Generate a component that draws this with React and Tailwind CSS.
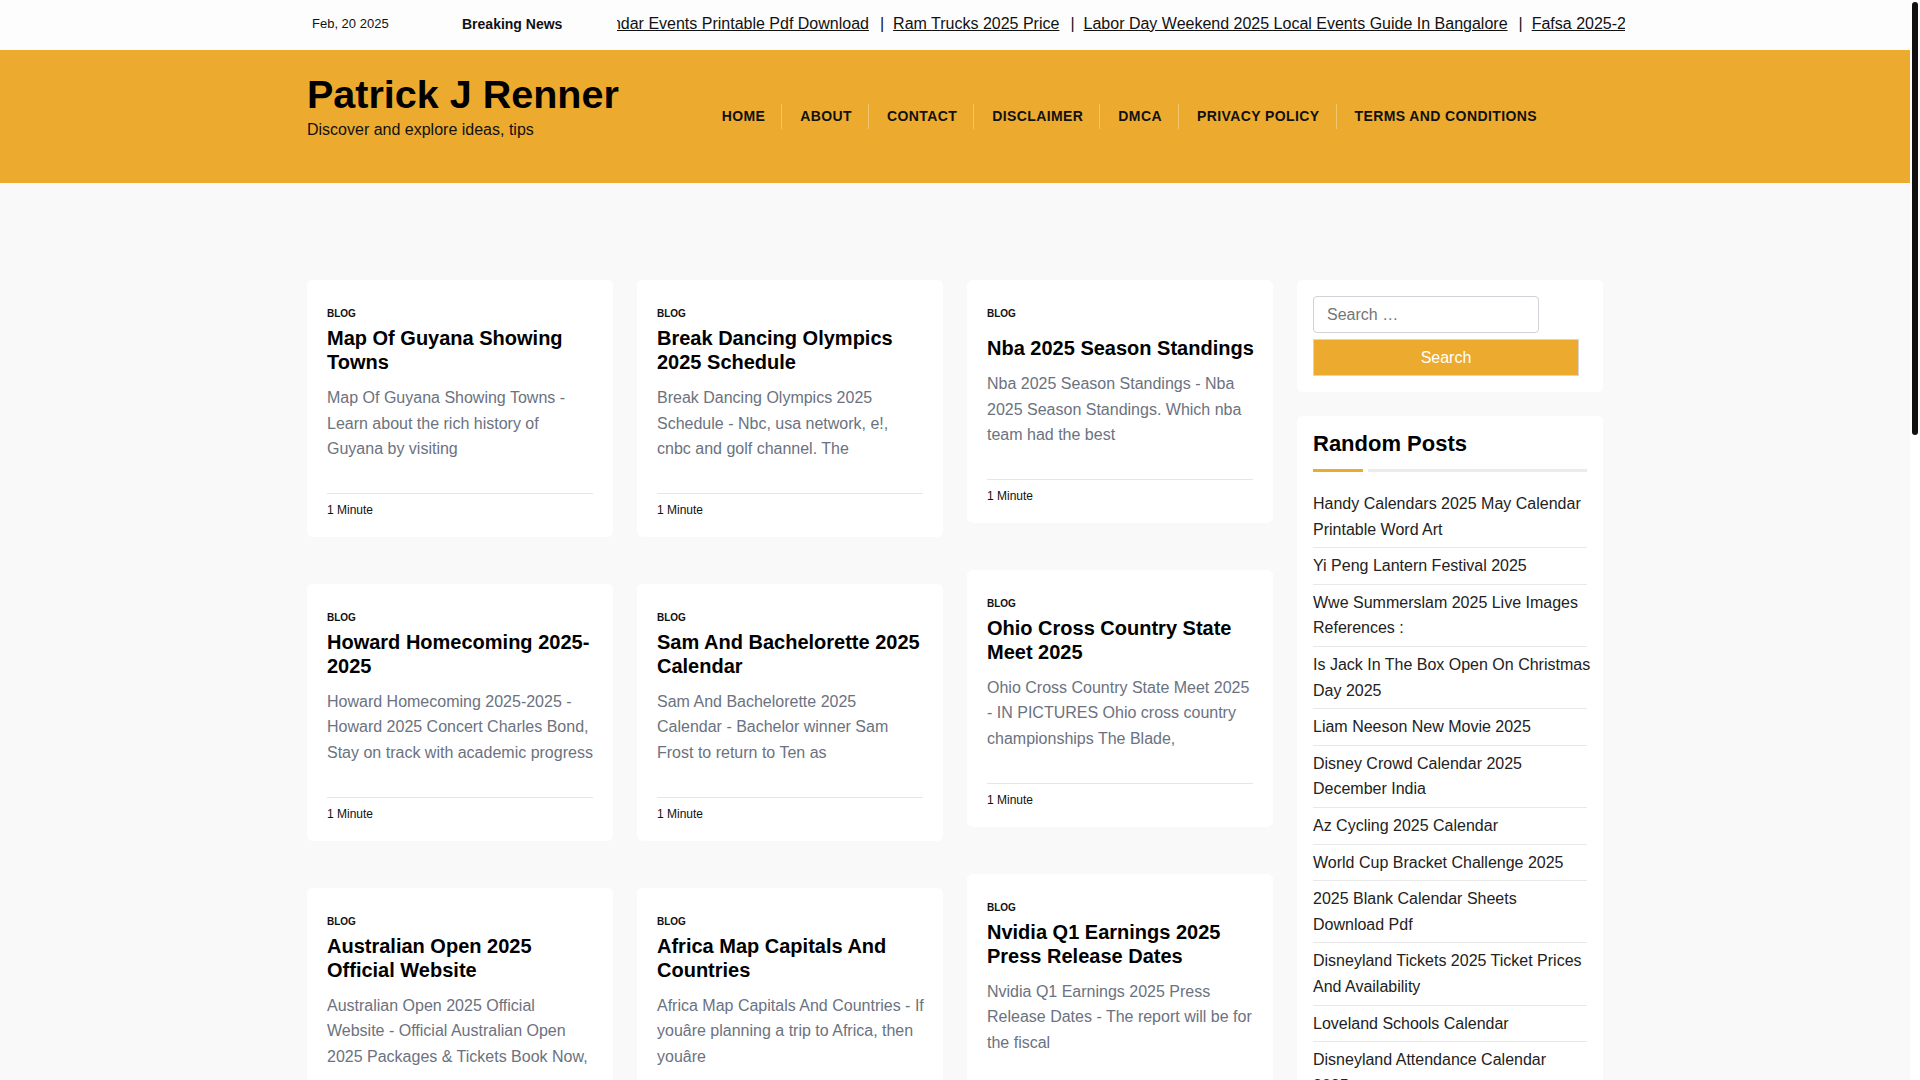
import React from 'react';

const tickerItems = [
  'Calendar Events Printable Pdf Download',
  'Ram Trucks 2025 Price',
  'Labor Day Weekend 2025 Local Events Guide In Bangalore',
  'Fafsa 2025-2026 Deadline Extended',
  'Yi Peng Lantern Festival 2025',
];

const navItems = ['Home', 'About', 'Contact', 'Disclaimer', 'DMCA', 'Privacy Policy', 'Terms and Conditions'];

const columns = [
  [
    { title: 'Map Of Guyana Showing Towns', excerpt: 'Map Of Guyana Showing Towns - Learn about the rich history of Guyana by visiting' },
    { title: 'Howard Homecoming 2025-2025', excerpt: 'Howard Homecoming 2025-2025 - Howard 2025 Concert Charles Bond, Stay on track with academic progress' },
    { title: 'Australian Open 2025 Official Website', excerpt: 'Australian Open 2025 Official Website - Official Australian Open 2025 Packages & Tickets Book Now,' },
    { title: 'Liam Neeson New Movie 2025', excerpt: 'Liam Neeson New Movie 2025 - The actor returns with a new action thriller this' },
    { title: 'Az Cycling 2025 Calendar', excerpt: 'Az Cycling 2025 Calendar - Find every road race, gravel event and group ride around' },
    { title: 'Loveland Schools Calendar Key Dates', excerpt: 'Loveland Schools Calendar - Stay informed about the first day, breaks and holidays for' },
    { title: 'World Cup Bracket Challenge 2025', excerpt: 'World Cup Bracket Challenge 2025 - Pick your winners and compete with friends for' },
  ],
  [
    { title: 'Break Dancing Olympics 2025 Schedule', excerpt: 'Break Dancing Olympics 2025 Schedule - Nbc, usa network, e!, cnbc and golf channel. The' },
    { title: 'Sam And Bachelorette 2025 Calendar', excerpt: 'Sam And Bachelorette 2025 Calendar - Bachelor winner Sam Frost to return to Ten as' },
    { title: 'Africa Map Capitals And Countries', excerpt: 'Africa Map Capitals And Countries - If youâre planning a trip to Africa, then youâre' },
    { title: 'Disney Crowd Calendar 2025 December India', excerpt: 'Disney Crowd Calendar 2025 December India - Plan the best days to visit the parks' },
    { title: 'Handy Calendars 2025 May Calendar Printable', excerpt: 'Handy Calendars 2025 May Calendar Printable Word Art - Free templates you can print' },
    { title: 'Wwe Summerslam 2025 Live Images', excerpt: 'Wwe Summerslam 2025 Live Images - See the best moments from the biggest party of' },
    { title: 'Disneyland Tickets 2025 Ticket Prices', excerpt: 'Disneyland Tickets 2025 Ticket Prices And Availability - Compare one day and multi' },
  ],
  [
    { title: 'Nba 2025 Season Standings', excerpt: 'Nba 2025 Season Standings - Nba 2025 Season Standings. Which nba team had the best', single: true },
    { title: 'Ohio Cross Country State Meet 2025', excerpt: 'Ohio Cross Country State Meet 2025 - IN PICTURES Ohio cross country championships The Blade,' },
    { title: 'Nvidia Q1 Earnings 2025 Press Release Dates', excerpt: 'Nvidia Q1 Earnings 2025 Press Release Dates - The report will be for the fiscal' },
    { title: 'Is Jack In The Box Open On Christmas Day 2025', excerpt: 'Is Jack In The Box Open On Christmas Day 2025 - Holiday hours for locations near' },
    { title: '2025 Blank Calendar Sheets Download Pdf', excerpt: '2025 Blank Calendar Sheets Download Pdf - Simple monthly and yearly layouts ready to' },
    { title: 'Disneyland Attendance Calendar 2025', excerpt: 'Disneyland Attendance Calendar 2025 - Know which weeks are the busiest before you' },
    { title: 'Yi Peng Lantern Festival 2025 Guide', excerpt: 'Yi Peng Lantern Festival 2025 - Everything you need to know about the festival in' },
  ],
];

const randomPosts = [
  { t: 'Handy Calendars 2025 May Calendar Printable Word Art' },
  { t: 'Yi Peng Lantern Festival 2025' },
  { t: 'Wwe Summerslam 2025 Live Images References :' },
  { t: 'Is Jack In The Box Open On Christmas Day 2025' },
  { t: 'Liam Neeson New Movie 2025' },
  { t: 'Disney Crowd Calendar 2025 December India' },
  { t: 'Az Cycling 2025 Calendar' },
  { t: 'World Cup Bracket Challenge 2025' },
  { t: '2025 Blank Calendar Sheets Download Pdf' },
  { t: 'Disneyland Tickets 2025 Ticket Prices And Availability' },
  { t: 'Loveland Schools Calendar' },
  { t: 'Disneyland Attendance Calendar 2025', narrow: true },
  { t: 'Ram Trucks 2025 Price' },
  { t: 'Fafsa 2025-2026 Deadline' },
];

const PostCard = ({ post }) => (
  <div className="bg-white rounded-[6px] px-5 pt-[28px] pb-[19px]">
    <div className="text-[10px] leading-[12px] font-bold uppercase text-[#111]">Blog</div>
    <h2 className={`${post.single ? 'mt-[16px]' : 'mt-[6px]'} mr-[-2px] text-[20px] leading-[24px] font-bold text-black`}>
      {post.title}
    </h2>
    <p className="mt-[11px] mr-[-2px] text-[16px] leading-[25.6px] text-[#6b7280]">{post.excerpt}</p>
    <div className="mt-[31px] border-t border-[#e6e6e6] pt-[8px] text-[12px] leading-[16px] text-[#111]">
      1 Minute
    </div>
  </div>
);

export default function App() {
  return (
    <div className="min-h-screen pr-[10px] bg-[#f9f9f9] font-['Liberation_Sans',Arial,sans-serif]">
      {/* top strip */}
      <div className="bg-[#fdfdfd] h-[50px]">
        <div className="w-[1296px] mx-auto h-full flex items-center pl-[5px] pb-[2px] whitespace-nowrap">
          <span className="w-[150px] shrink-0 text-[13px] text-[#111]">Feb, 20 2025</span>
          <span className="w-[155px] shrink-0 text-[14px] font-bold text-[#111]">Breaking News</span>
          <div className="w-[1008px] shrink-0 overflow-hidden">
            <div className="flex ml-[-38px] text-[16px] text-[#111]">
              {tickerItems.map((t, i) => (
                <React.Fragment key={t}>
                  {i > 0 && <span className="pl-[11px] pr-[9px]">|</span>}
                  <a href="#" className="underline">{t}</a>
                </React.Fragment>
              ))}
            </div>
          </div>
        </div>
      </div>

      {/* header */}
      <header className="bg-[#ecab2e] h-[133px]">
        <div className="w-[1296px] mx-auto h-full flex justify-between">
          <div className="pt-[21px]">
            <h1 className="text-[39.5px] leading-[46px] font-bold text-black">Patrick J Renner</h1>
            <p className="mt-[4px] text-[16px] leading-[18px] text-[#111]">Discover and explore ideas, tips</p>
          </div>
          <nav className="flex items-center pr-[50px] pb-[1px]">
            {navItems.map((n, i) => (
              <a
                key={n}
                href="#"
                className={`h-[25px] flex items-center pl-[18px] pr-[16px] text-[14px] font-bold uppercase tracking-[0.4px] text-[#111] ${i < navItems.length - 1 ? 'border-r border-[#f3c66b]' : ''}`}
              >
                {n}
              </a>
            ))}
          </nav>
        </div>
      </header>

      {/* content */}
      <main className="w-[1296px] mx-auto pt-[97px] pb-[60px] flex gap-[24px] items-start">
        {columns.map((col, ci) => (
          <div key={ci} className="w-[306px] flex flex-col gap-[47px]">
            {col.map((p) => (
              <PostCard key={p.title} post={p} />
            ))}
          </div>
        ))}

        <aside className="w-[306px] flex flex-col gap-[24px]">
          <div className="bg-white rounded-[6px] p-4">
            <input
              type="search"
              placeholder="Search …"
              className="block w-[226px] h-[37px] border border-[#cfd2d6] rounded-[4px] px-[13px] text-[16px] text-[#333] placeholder:text-[#757575] outline-none"
            />
            <button className="mt-[6px] block w-[266px] h-[37px] bg-[#ecab2e] border border-[#d6d6d6] text-white text-[16px]">
              Search
            </button>
          </div>

          <div className="bg-white rounded-[6px] p-4">
            <h3 className="text-[22px] leading-[24px] font-bold text-black">Random Posts</h3>
            <div className="mt-[13px] flex gap-[5px] h-[3px] w-[274px]">
              <div className="w-[50px] bg-[#ecab2e]" />
              <div className="flex-1 bg-[#ebebeb]" />
            </div>
            <ul className="mt-[14px] w-[274px]">
              {randomPosts.map((r) => (
                <li key={r.t} className="py-[5px] border-b border-[#e8e8e8] text-[16px] leading-[25.6px] text-[#222]">
                  <a href="#" className={`block ${r.narrow ? 'w-[270px]' : 'w-[278px]'}`}>{r.t}</a>
                </li>
              ))}
            </ul>
          </div>
        </aside>
      </main>

      <footer className="bg-[#222] h-[260px]" />

      {/* page scrollbar */}
      <div className="fixed right-0 top-0 h-screen w-[10px] bg-white">
        <div className="mx-auto mt-[2px] h-[433px] w-[6px] rounded-[3px] bg-[#111]" />
      </div>
    </div>
  );
}
